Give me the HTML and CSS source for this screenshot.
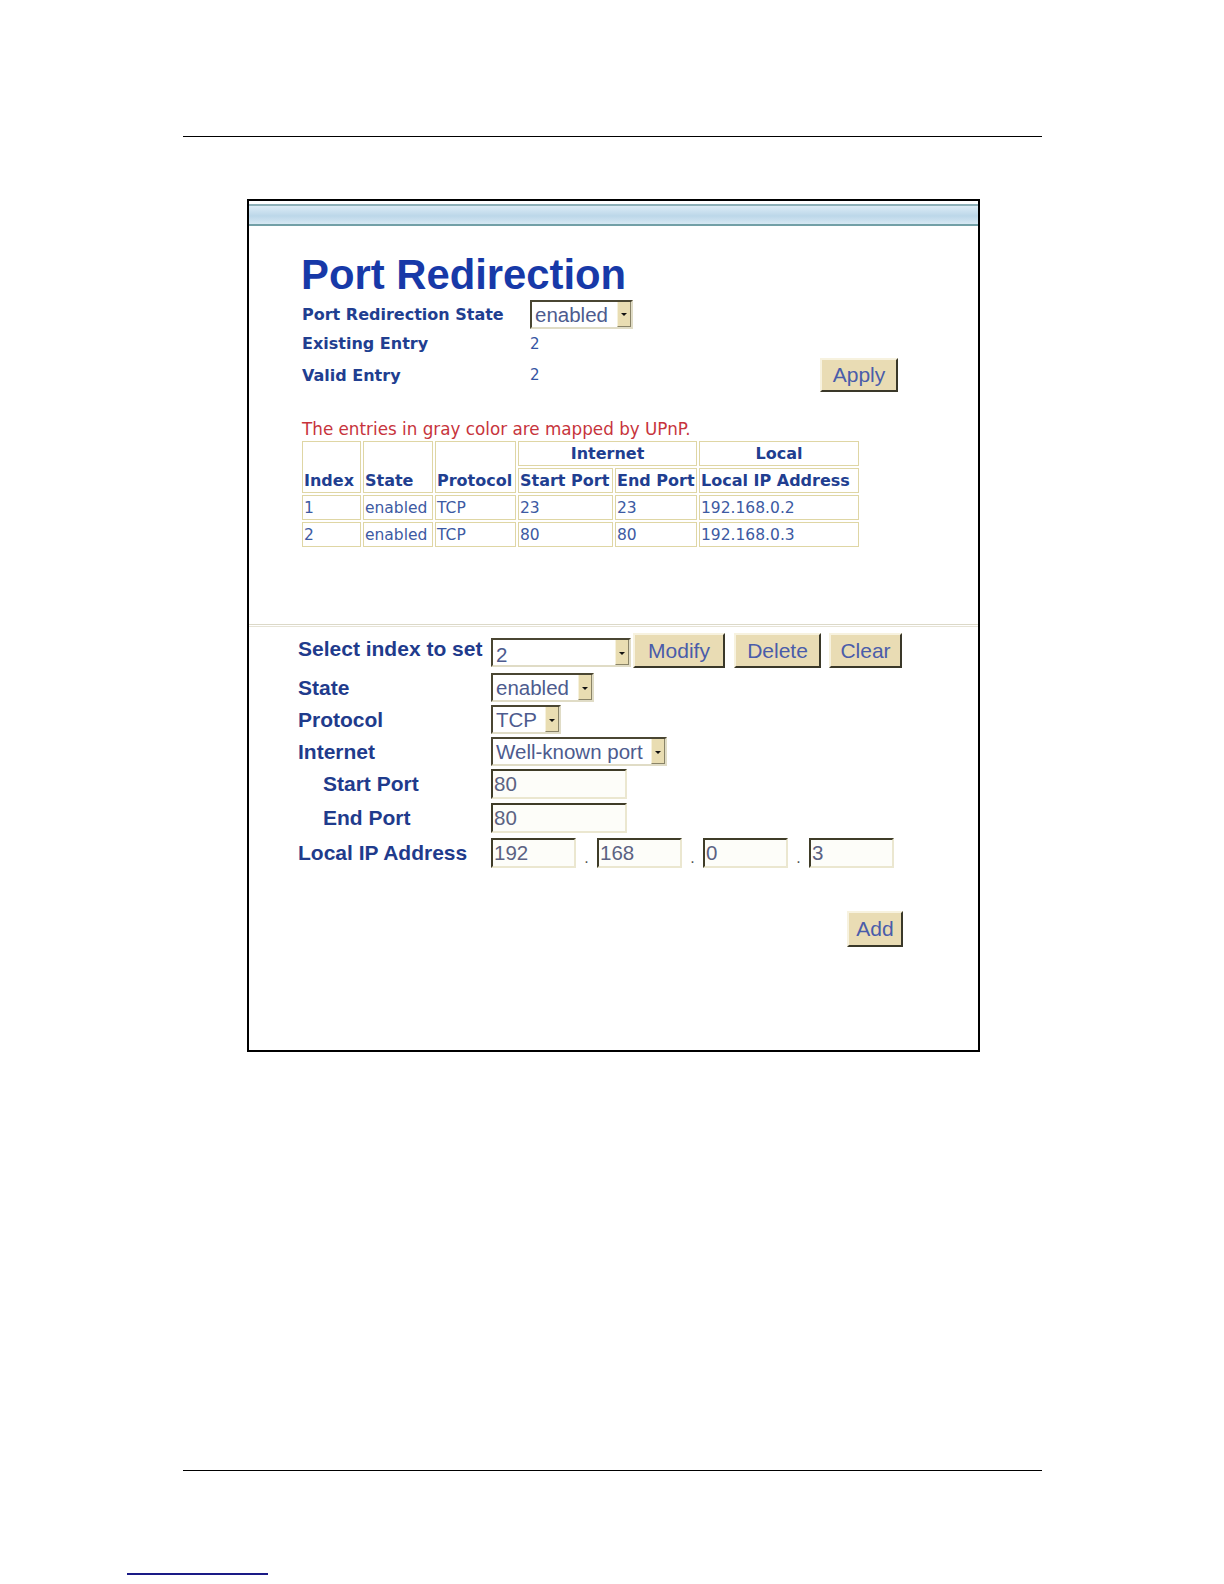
FILE: index.html
```html
<!DOCTYPE html>
<html lang="en">
<head>
<meta charset="utf-8">
<title>Port Redirection</title>
<link rel="stylesheet" href="styles.css">
</head>
<body>
<div class="page">
  <div class="rule rule-top"></div>
  <div class="frame">
    <div class="topbar"></div>
    <div class="upper">
      <h1 class="title">Port Redirection</h1>
      <div class="status">
        <div class="lbl">Port Redirection State</div>
        <div class="val"><span class="sel sel-state1"><span class="sel-text">enabled</span><span class="sel-arrow"></span></span></div>
        <div></div>
        <div class="lbl">Existing Entry</div>
        <div class="val num">2</div>
        <div></div>
        <div class="lbl">Valid Entry</div>
        <div class="val num">2</div>
        <div class="apply-cell"><button class="btn b-apply">Apply</button></div>
      </div>
      <p class="note">The entries in gray color are mapped by UPnP.</p>
      <table class="grid">
        <colgroup>
          <col class="c1"><col class="c2"><col class="c3"><col class="c4"><col class="c5"><col class="c6">
        </colgroup>
        <thead>
          <tr>
            <th rowspan="2" class="bottom">Index</th>
            <th rowspan="2" class="bottom">State</th>
            <th rowspan="2" class="bottom">Protocol</th>
            <th colspan="2" class="center">Internet</th>
            <th class="center">Local</th>
          </tr>
          <tr>
            <th>Start Port</th>
            <th>End Port</th>
            <th>Local IP Address</th>
          </tr>
        </thead>
        <tbody>
          <tr><td>1</td><td>enabled</td><td>TCP</td><td>23</td><td>23</td><td>192.168.0.2</td></tr>
          <tr><td>2</td><td>enabled</td><td>TCP</td><td>80</td><td>80</td><td>192.168.0.3</td></tr>
        </tbody>
      </table>
    </div>
    <div class="sep"></div>
    <div class="form">
      <div class="frow r1">
        <div class="flbl">Select index to set</div>
        <span class="sel sel-idx"><span class="sel-text low">2</span><span class="sel-arrow"></span></span>
        <button class="btn b-modify">Modify</button>
        <button class="btn b-delete">Delete</button>
        <button class="btn b-clear">Clear</button>
      </div>
      <div class="frow r2">
        <div class="flbl">State</div>
        <span class="sel sel-state"><span class="sel-text">enabled</span><span class="sel-arrow"></span></span>
      </div>
      <div class="frow r3">
        <div class="flbl">Protocol</div>
        <span class="sel sel-proto"><span class="sel-text">TCP</span><span class="sel-arrow"></span></span>
      </div>
      <div class="frow r4">
        <div class="flbl">Internet</div>
        <span class="sel sel-inet"><span class="sel-text">Well-known port</span><span class="sel-arrow"></span></span>
      </div>
      <div class="frow r5">
        <div class="flbl sub">Start Port</div>
        <span class="inp inp-port">80</span>
      </div>
      <div class="frow r6">
        <div class="flbl sub">End Port</div>
        <span class="inp inp-port">80</span>
      </div>
      <div class="frow r7">
        <div class="flbl">Local IP Address</div>
        <span class="inp inp-ip">192</span><span class="dot">.</span>
        <span class="inp inp-ip">168</span><span class="dot">.</span>
        <span class="inp inp-ip">0</span><span class="dot">.</span>
        <span class="inp inp-ip">3</span>
      </div>
      <div class="add-row">
        <button class="btn b-add">Add</button>
      </div>
    </div>
  </div>
  <div class="rule rule-bottom"></div>
  <div class="footlink"></div>
</div>
</body>
</html>
```
FILE: styles.css
```css
* { box-sizing: border-box; }
html, body { margin: 0; padding: 0; background: #fff; }
body { font-family: "Liberation Sans", Arial, sans-serif; }

.page {
  width: 1224px;
  height: 1584px;
  padding-top: 136px;
  overflow: hidden;
}

.rule {
  margin-left: 183px;
  width: 859px;
  height: 0;
  border-top: 1px solid #000;
}
.rule-bottom { margin-top: 418px; }

.footlink {
  margin-top: 102px;
  margin-left: 127px;
  width: 141px;
  height: 0;
  border-top: 2px solid #1a1a86;
}

.frame {
  margin-top: 62px;
  margin-left: 247px;
  width: 733px;
  height: 853px;
  border: 2px solid #000;
  background: #fff;
}

.topbar {
  margin-top: 3px;
  height: 22px;
  border-top: 2px solid #8db0b8;
  border-bottom: 2px solid #72a0a7;
  background: linear-gradient(#dcecf6, #bcd7e9 55%, #d6e8f3);
}

.upper {
  height: 398px;
  padding-left: 52px;
  padding-right: 80px;
  padding-top: 26px;
}

.title {
  margin: 0;
  font-family: "Liberation Sans", Arial, sans-serif;
  font-weight: bold;
  font-size: 41.8px;
  line-height: 46px;
  color: #1739a8;
}

.status {
  display: grid;
  grid-template-columns: 229px 1fr auto;
  grid-template-rows: 32px 27px 36px;
  align-items: center;
}
.lbl {
  font-family: "DejaVu Sans", Verdana, sans-serif;
  font-weight: bold;
  font-size: 16px;
  color: #213e90;
  padding-left: 1px;
}
.val.num {
  font-family: "DejaVu Sans", Verdana, sans-serif;
  font-size: 15px;
  color: #3454a2;
}
.apply-cell { display: flex; justify-content: flex-end; }

.note {
  margin: 27px 0 1px 1px;
  font-family: "DejaVu Sans", Verdana, sans-serif;
  font-size: 16.8px;
  line-height: 18px;
  color: #c7343c;
  white-space: nowrap;
}

.grid {
  table-layout: fixed;
  border-collapse: separate;
  border-spacing: 2px;
  width: 561px;
  margin-left: -1px;
  font-family: "DejaVu Sans", Verdana, sans-serif;
}
.grid .c1 { width: 59px; }
.grid .c2 { width: 70px; }
.grid .c3 { width: 81px; }
.grid .c4 { width: 95px; }
.grid .c5 { width: 82px; }
.grid .c6 { width: 160px; }
.grid th, .grid td {
  border: 1px solid #dfd6a4;
  height: 25px;
  padding: 0 1px;
  white-space: nowrap;
  overflow: hidden;
  text-align: left;
}
.grid th {
  font-weight: bold;
  font-size: 16px;
  color: #213e90;
  vertical-align: middle;
}
.grid th.bottom { vertical-align: bottom; padding-bottom: 2px; }
.grid th.center { text-align: center; }
.grid td {
  font-size: 15.5px;
  color: #3d5aa2;
  vertical-align: middle;
}

.sep {
  height: 3px;
  border-top: 1px solid #dcd9c8;
  border-bottom: 1px solid #e6e3d6;
}

.form {
  padding-left: 49px;
  padding-right: 75px;
}
.frow {
  display: flex;
  align-items: center;
}
.r1 { height: 41px; align-items: flex-start; }
.r2 { height: 29px; margin-top: 5px; }
.r3 { height: 29px; margin-top: 3px; }
.r4 { height: 29px; margin-top: 3px; }
.r5 { height: 30px; margin-top: 3px; }
.r6 { height: 30px; margin-top: 4px; }
.r7 { height: 30px; margin-top: 5px; }

.flbl {
  width: 193px;
  flex: none;
  font-family: "Liberation Sans", Arial, sans-serif;
  font-weight: bold;
  font-size: 21px;
  color: #1f3b8c;
  white-space: nowrap;
}
.r1 .flbl { align-self: center; margin-top: 3px; }
.flbl.sub { padding-left: 25px; }

.sel {
  display: inline-flex;
  flex: none;
  height: 29px;
  border: 2px solid;
  border-color: #4a4632 #e0dcc6 #e0dcc6 #4a4632;
  background: #fff;
  font-family: "Liberation Sans", Arial, sans-serif;
  font-size: 20.5px;
  color: #4d5b8e;
}
.sel-text {
  flex: 1;
  padding-left: 3px;
  line-height: 25px;
  white-space: nowrap;
  overflow: hidden;
}
.sel-text.low { line-height: 29px; }
.sel-arrow {
  flex: none;
  width: 14px;
  background: #e9ddb2;
  border-left: 1px solid #f6f1dc;
  border-right: 1px solid #8a8468;
  border-bottom: 1px solid #8a8468;
  display: flex;
  align-items: center;
  justify-content: center;
}
.sel-arrow::after {
  content: "";
  display: block;
  width: 0;
  height: 0;
  border-top: 3px solid #111;
  border-left: 3px solid transparent;
  border-right: 3px solid transparent;
  margin-top: 2px;
}
.sel-state1 { width: 103px; }
.sel-idx { width: 140px; margin-top: 11px; }
.sel-state { width: 103px; }
.sel-proto { width: 70px; }
.sel-inet { width: 176px; }

.inp {
  display: inline-block;
  flex: none;
  height: 30px;
  border: 2px solid;
  border-color: #3f3c28 #ebe7d0 #ebe7d0 #3f3c28;
  background: #fdfdf9;
  font-family: "Liberation Sans", Arial, sans-serif;
  font-size: 20.5px;
  line-height: 26px;
  color: #5b6282;
  padding-left: 1px;
}
.inp-port { width: 136px; }
.inp-ip { width: 85px; }
.dot {
  width: 21px;
  flex: none;
  text-align: center;
  align-self: flex-end;
  font-family: "Liberation Sans", Arial, sans-serif;
  font-size: 16px;
  line-height: 20px;
  color: #555;
}

.btn {
  flex: none;
  height: 34px;
  padding: 0;
  margin: 0;
  border: 2px solid;
  border-color: #f7f2df #3a3829 #3a3829 #f7f2df;
  background: #e9dcb4;
  font-family: "Liberation Sans", Arial, sans-serif;
  font-size: 21px;
  color: #4a5caa;
  line-height: 28px;
}
.b-apply { width: 78px; }
.b-modify { width: 92px; height: 35px; margin-left: 2px; margin-top: 6px; }
.b-delete { width: 87px; height: 35px; margin-left: 9px; margin-top: 6px; }
.b-clear { width: 73px; height: 35px; margin-left: 8px; margin-top: 6px; }
.b-add { width: 56px; height: 36px; }

.add-row {
  display: flex;
  justify-content: flex-end;
  margin-top: 43px;
}
```
